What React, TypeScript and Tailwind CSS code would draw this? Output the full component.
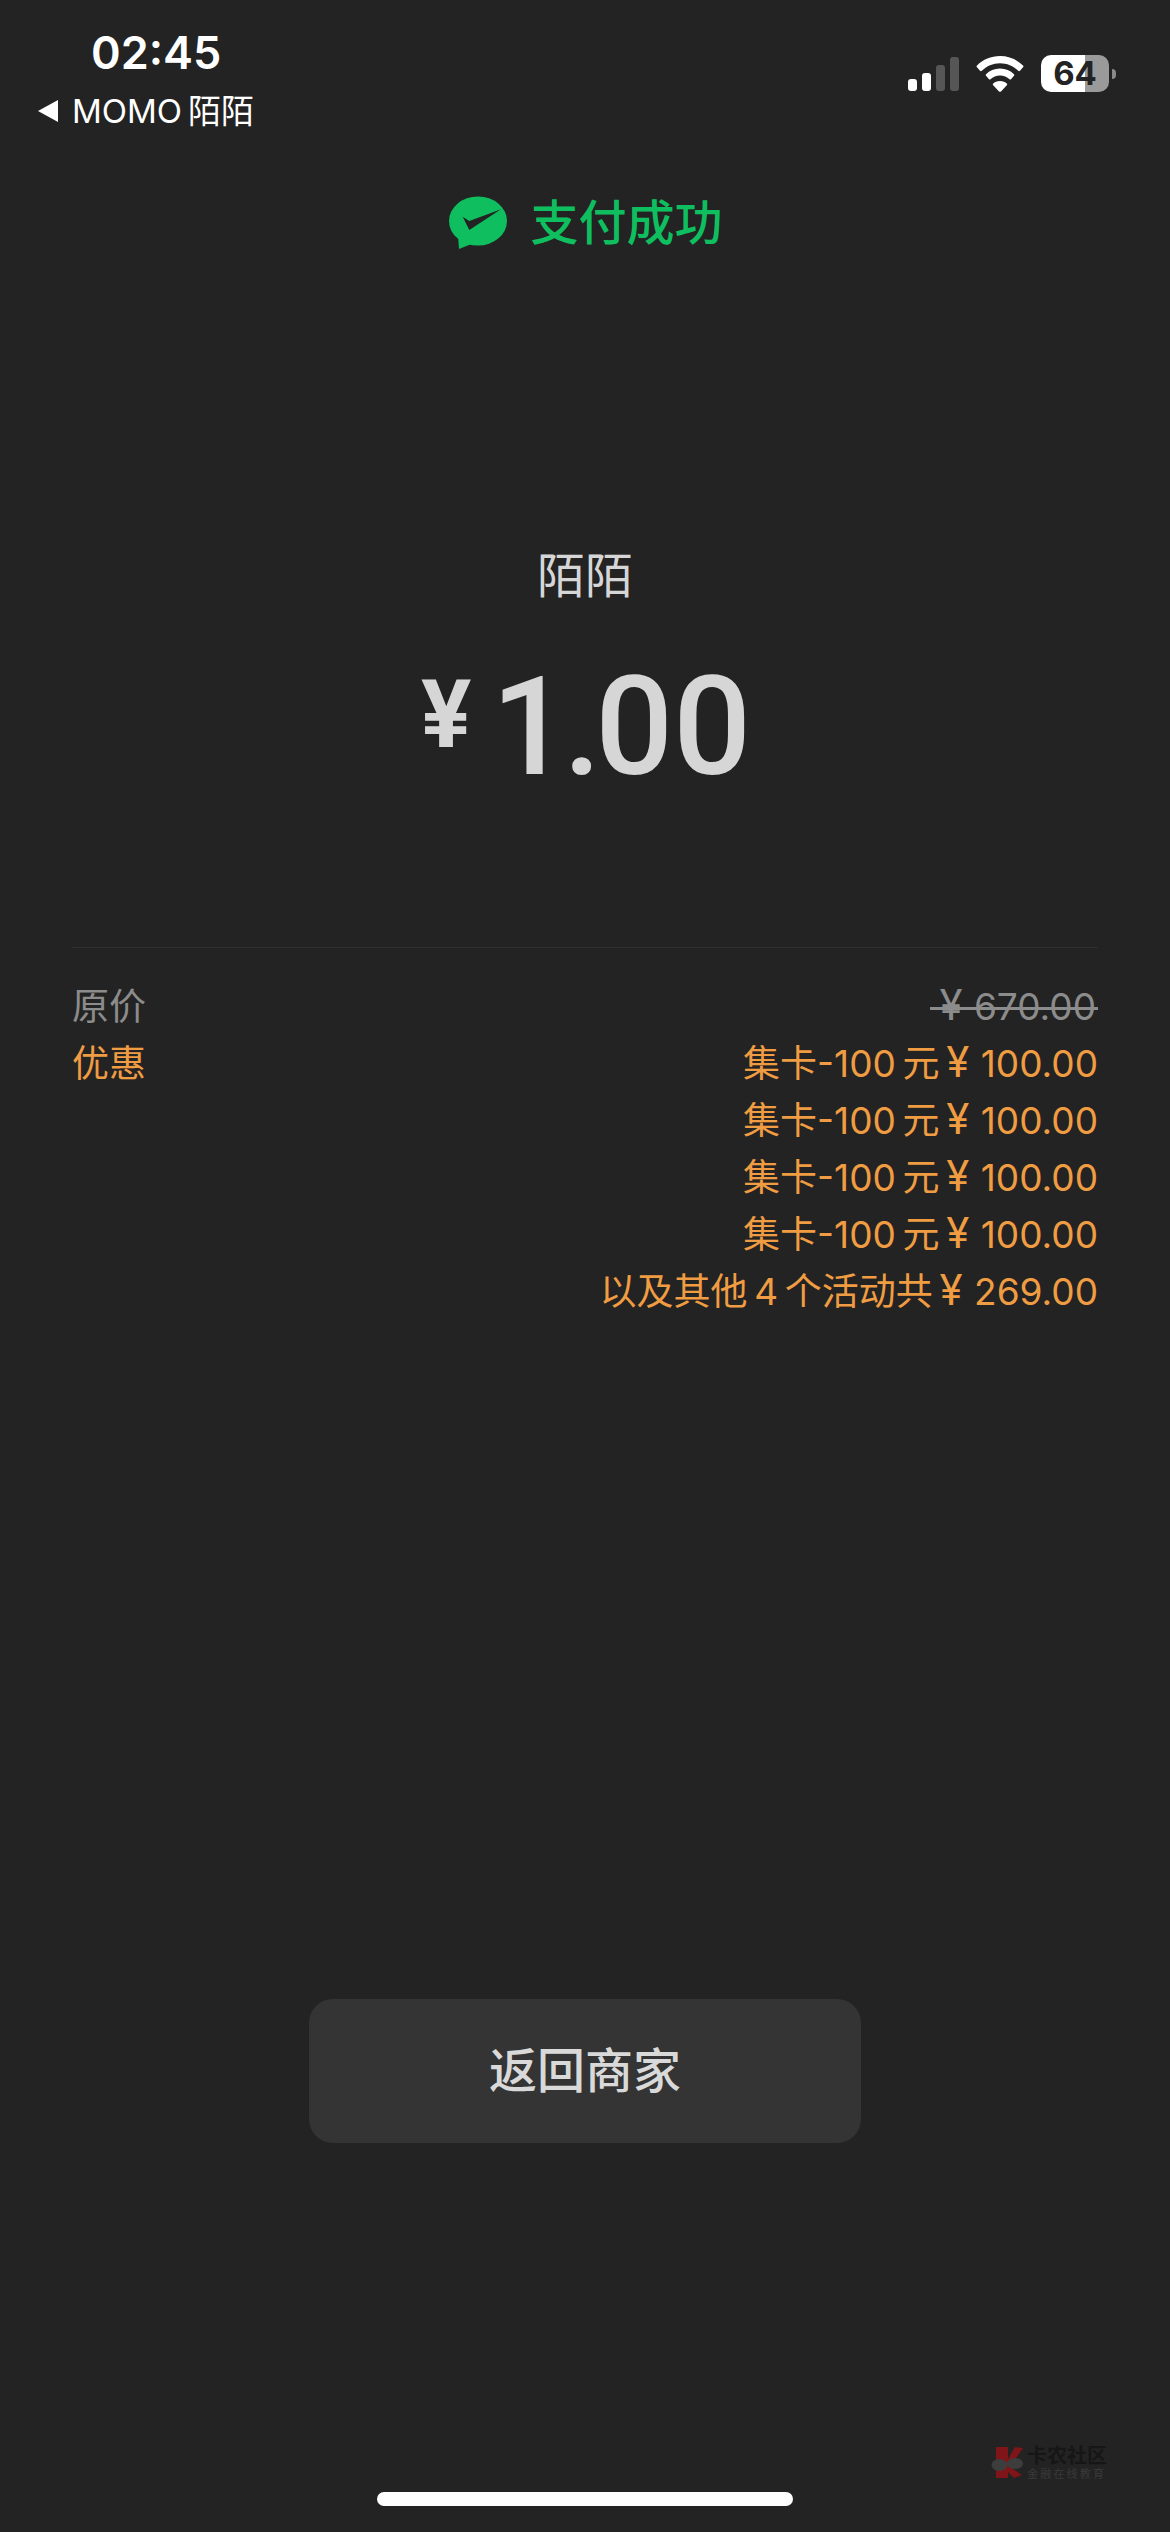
const SANS = "font-['Inter','Noto_Sans_CJK_SC',sans-serif]";
const THIN = "\u2009";

function Signal() {
  return (
    <svg width="52" height="35" viewBox="0 0 52 35" aria-hidden="true">
      <rect x="0" y="22" width="9" height="12" rx="3" fill="#fff" />
      <rect x="14" y="16" width="9" height="18" rx="3" fill="#fff" />
      <rect x="28" y="8" width="9" height="26" rx="3" fill="#565656" />
      <rect x="42" y="0" width="9" height="34" rx="3" fill="#565656" />
    </svg>
  );
}

function Wifi() {
  return (
    <svg width="48" height="36" viewBox="0 0 48 36" aria-hidden="true">
      <path d="M24 0C15 0 7 3.500 1 9.500c-.6.600-.6 1.200 0 1.800l3 3.500c.6.600 1.200.6 1.800 0C10.500 10 17 7.200 24 7.200s13.500 2.800 18.200 7.600c.6.600 1.200.6 1.800 0l3-3.500c.6-.6.6-1.200 0-1.800C41 3.500 33 0 24 0Z" fill="#fff" />
      <path d="M24 12.500c-5.500 0-10.500 2.200-14 5.800-.5.500-.5 1 0 1.500l3 3.400c.5.500 1 .5 1.500 0 2.500-2.300 5.800-3.700 9.500-3.700s7 1.400 9.500 3.700c.5.500 1 .5 1.500 0l3-3.400c.5-.5.5-1 0-1.500-3.500-3.600-8.500-5.800-14-5.800Z" fill="#fff" />
      <path d="M24 25c-2.800 0-5.300 1-7 2.700-.4.400-.4.800 0 1.200l6 6.500c.6.600 1.400.6 2 0l6-6.500c.4-.4.400-.8 0-1.200-1.700-1.700-4.200-2.700-7-2.700Z" fill="#fff" />
    </svg>
  );
}

function WeChatMark() {
  return (
    <svg width="60" height="54" viewBox="0 0 60 54" aria-hidden="true">
      <ellipse cx="29" cy="25" rx="29" ry="24.500" fill="#0fbf5f" />
      <path d="M9 39 L10 53 L25 47 Z" fill="#0fbf5f" />
      <path d="M13.700 20.700 L20.300 25 L52 13.300 L20.300 34 Z" fill="#232323" />
    </svg>
  );
}

function KLogo() {
  return (
    <svg width="36" height="36" viewBox="0 0 36 36" aria-hidden="true">
      <path d="M6 2H18V14L25 2L33 3L20 22L32 30L24 33L18 27V33H6Z" fill="#7f1518" />
      <ellipse cx="9.500" cy="20" rx="8" ry="6" fill="#3d3d3d" />
      <ellipse cx="25" cy="18.500" rx="8" ry="5.500" fill="#3d3d3d" />
    </svg>
  );
}

function Row({ left, children, tone }: { left: string; children: React.ReactNode; tone: string }) {
  return (
    <div className={`flex justify-between ${tone}`}>
      <span>{left}</span>
      <div className="flex flex-col items-end">{children}</div>
    </div>
  );
}

function Money({ value }: { value: string }) {
  return (
    <>
      <span className="text-[42px] leading-[1px]">¥</span>{" "}
      <span className="ml-[1px]">{value}</span>
    </>
  );
}

function Deal() {
  return (
    <span>
      {`集卡-100${THIN}元${THIN}`}
      <Money value="100.00" />
    </span>
  );
}

export default function App() {
  return (
    <div className="relative flex h-[2532px] w-[1170px] flex-col overflow-hidden bg-[#232323]">
      <header className={`flex h-[140px] items-start justify-between ${SANS}`}>
        <div className="pl-[37px]">
          <div className="mt-[28px] pl-[54px] text-[45px] leading-[50px] font-semibold text-white">02:45</div>
          <div className="mt-[11px] flex items-center gap-[13px] text-[33px] leading-[44px] text-white">
            <svg width="22" height="22" viewBox="0 0 22 22" aria-hidden="true">
              <path d="M21 0 V22 L1 11 Z" fill="#fff" />
            </svg>
            <span>{`MOMO${THIN}陌陌`}</span>
          </div>
        </div>
        <div className="mt-[55px] mr-[54px] flex items-start">
          <div className="mt-[2px]"><Signal /></div>
          <div className="mt-[1px] ml-[16px]"><Wifi /></div>
          <div className="ml-[17px] flex h-[37px] w-[68px] items-center justify-center rounded-[10px] bg-[linear-gradient(90deg,#fff_65%,#9a9a9a_65%)] text-[33px] leading-none font-bold text-[#232323]">64</div>
          <div className="mt-[14px] ml-[3px] h-[10px] w-[4px] rounded-r-full bg-[#8a8a8a]" />
        </div>
      </header>

      <div className={`mt-[56px] flex h-[54px] items-center justify-center gap-[21px] pl-[2px] text-[48px] font-medium text-[#0fbf5f] ${SANS}`}>
        <WeChatMark />
        <span className="leading-[54px]">支付成功</span>
      </div>

      <div className={`mt-[296px] text-center text-[48px] leading-[60px] text-[#d6d6d6] ${SANS}`}>陌陌</div>

      <div className="mt-[51px] flex h-[140px] items-start justify-center gap-[20px] pl-[2px] font-['Roboto','Noto_Sans_CJK_SC',sans-serif] text-[#d6d6d6]">
        <span className="mt-[8px] text-[94px] leading-[100px] font-bold">¥</span>
        <span className="text-[137px] leading-[140px] font-medium">
          <span className="tracking-[-6px]">1.</span>00
        </span>
      </div>

      <div className="mx-[72px] mt-[150px] h-[1px] bg-[#2f2f2f]" />

      <div className={`mx-[72px] mt-[30px] text-[37px] leading-[57px] ${SANS}`}>
        <Row left="原价" tone="text-[#8c8c8c]">
          <span className="relative inline-block pr-[2px]">
            <Money value="670.00" />
            <span className="absolute top-[29px] right-0 -left-[9px] h-[3px] bg-[#8c8c8c]" />
          </span>
        </Row>
        <Row left="优惠" tone="text-[#f09c42]">
          <Deal />
          <Deal />
          <Deal />
          <Deal />
          <span>
            {`以及其他${THIN}4${THIN}个活动共${THIN}`}
            <Money value="269.00" />
          </span>
        </Row>
      </div>

      <button className={`mx-auto mt-[679px] flex h-[144px] w-[552px] items-center justify-center rounded-[24px] bg-[#343434] text-[48px] font-medium text-[#d9d9d9] ${SANS}`}>
        返回商家
      </button>

      <div className="mx-auto mt-[349px] h-[14px] w-[416px] rounded-full bg-white" />

      <div className={`absolute top-[2445px] left-[990px] flex items-center gap-[1px] ${SANS}`}>
        <KLogo />
        <div className="flex flex-col">
          <span className="text-[20px] leading-[22px] font-bold text-[#161616]">卡农社区</span>
          <span className="text-[11px] leading-[14px] tracking-[2.200px] text-[#3a3a3a]">金融在线教育</span>
        </div>
      </div>
    </div>
  );
}
